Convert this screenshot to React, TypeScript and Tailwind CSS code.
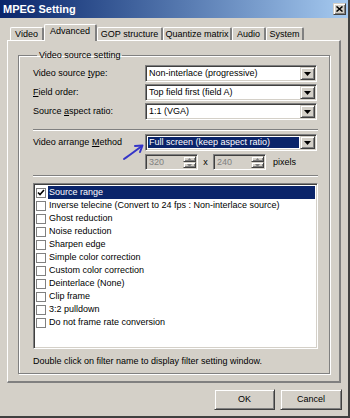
import React from 'react';

const sunken =
  'border border-t-[#808080] border-l-[#808080] border-r-white border-b-white shadow-[inset_1px_1px_0_#404040,inset_-1px_-1px_0_#d4d0c8]';
const raised =
  'border border-t-[#d4d0c8] border-l-[#d4d0c8] border-r-[#404040] border-b-[#404040] shadow-[inset_1px_1px_0_#fff,inset_-1px_-1px_0_#808080]';

const DropButton = () => (
  <div className={`flex w-[15px] items-center justify-center bg-[#d4d0c8] ${raised}`}>
    <svg width="7" height="4" viewBox="0 0 7 4">
      <path d="M0 0h7L3.5 4z" fill="#000" />
    </svg>
  </div>
);

const Combo = ({ value, active }: { value: string; active?: boolean }) => (
  <div className={`flex h-[17px] w-[172px] bg-white p-[1px] ${sunken}`}>
    <div className="flex min-w-0 flex-1 p-[1px]">
      <span className={`flex flex-1 items-center px-[1px] ${active ? 'bg-[#0a246a] text-white' : ''}`}>{value}</span>
    </div>
    <DropButton />
  </div>
);

const SpinBtn = ({ up }: { up?: boolean }) => (
  <div className={`flex flex-1 items-center justify-center bg-[#d4d0c8] ${raised}`}>
    <svg width="5" height="3" viewBox="0 0 5 3">
      <path d={up ? 'M0 3h5L2.5 0z' : 'M0 0h5L2.5 3z'} fill="#808080" />
    </svg>
  </div>
);

const Spin = ({ value }: { value: string }) => (
  <div className={`flex h-[16px] w-[53px] bg-[#d4d0c8] p-[1px] ${sunken}`}>
    <span className="flex flex-1 items-center pl-[2px] text-[#808080]">{value}</span>
    <div className="flex w-[13px] flex-col">
      <SpinBtn up />
      <SpinBtn />
    </div>
  </div>
);

const Check = ({ on }: { on?: boolean }) => (
  <span className="flex h-[10px] w-[10px] shrink-0 items-center justify-center border border-[#808080] bg-white">
    {on && (
      <svg width="8" height="7" viewBox="0 0 8 7">
        <path d="M1 3.5 L3 5.5 L7 1" stroke="#000" strokeWidth="1.6" fill="none" />
      </svg>
    )}
  </span>
);

const Separator = ({ className }: { className?: string }) => (
  <div className={`h-[2px] border-t border-t-[#808080] border-b border-b-white ${className ?? ''}`} />
);

const TABS = [
  { label: 'Video', w: 'w-[34px]' },
  { label: 'Advanced', w: 'w-[53px]', active: true },
  { label: 'GOP structure', w: 'w-[66px]' },
  { label: 'Quantize matrix', w: 'w-[69px]' },
  { label: 'Audio', w: 'w-[34px]' },
  { label: 'System', w: 'w-[38px]' },
];

const FILTERS = [
  'Source range',
  'Inverse telecine (Convert to 24 fps : Non-interlace source)',
  'Ghost reduction',
  'Noise reduction',
  'Sharpen edge',
  'Simple color correction',
  'Custom color correction',
  'Deinterlace (None)',
  'Clip frame',
  '3:2 pulldown',
  'Do not frame rate conversion',
];

const Label = ({ before, u, after }: { before: string; u: string; after: string }) => (
  <span className="w-[112px] shrink-0">
    {before}
    <span className="underline">{u}</span>
    {after}
  </span>
);

export default function App() {
  return (
    <div className="flex h-[418px] w-[350px] flex-col border-r-2 border-b-2 border-r-[#404040] border-b-[#404040] bg-[#d4d0c8] font-['Liberation_Sans','Arial',sans-serif] text-[9px] leading-[11px] text-black">
      {/* title bar */}
      <div className="flex h-[18px] items-center justify-between bg-gradient-to-r from-[#0a246a] to-[#a6caf0] pl-[3px] pr-[2px]">
        <span className="text-[11px] font-bold text-white">MPEG Setting</span>
        <div className={`flex h-[12px] w-[13px] items-center justify-center bg-[#d4d0c8] ${raised}`}>
          <svg width="7" height="6" viewBox="0 0 7 6">
            <path d="M0.5 0.5 L6.5 5.5 M6.5 0.5 L0.5 5.5" stroke="#000" strokeWidth="1.5" />
          </svg>
        </div>
      </div>

      {/* tabs */}
      <div className="mt-[6px] flex h-[16px] items-end pl-[10px]">
        {TABS.map((t) => (
          <div
            key={t.label}
            className={`${t.w} relative flex items-center justify-center rounded-t-[2px] border-t border-l border-r-2 border-t-white border-l-white border-r-[#808080] bg-[#d4d0c8] ${
              t.active ? 'z-10 -mb-px h-[17px] pb-[3px]' : 'h-[13px]'
            }`}
          >
            {t.label}
          </div>
        ))}
      </div>

      {/* tab panel */}
      <div className="ml-[7px] flex h-[343px] w-[334px] flex-col border-t border-l border-r-2 border-b-2 border-t-white border-l-white border-r-[#808080] border-b-[#808080] pt-[9px] pl-[10px]">
        <fieldset className="h-[324px] w-[312px] border border-[#808080] pl-[14px] pr-[11px] shadow-[inset_1px_1px_0_#fff,1px_1px_0_#fff]">
          <legend className="ml-[4px] px-[2px]">Video source setting</legend>

          <div className="mt-[4px] flex flex-col gap-[2px]">
            <div className="flex items-center">
              <Label before="Video source " u="t" after="ype:" />
              <Combo value="Non-interlace (progressive)" />
            </div>
            <div className="flex items-center">
              <Label before="" u="F" after="ield order:" />
              <Combo value="Top field first (field A)" />
            </div>
            <div className="flex items-center">
              <Label before="Source " u="a" after="spect ratio:" />
              <Combo value="1:1 (VGA)" />
            </div>
          </div>

          <Separator className="mt-[9px]" />

          <div className="relative mt-[3px] flex items-center">
            <Label before="Video arrange " u="M" after="ethod" />
            <Combo value="Full screen (keep aspect ratio)" active />
            <svg className="absolute left-[88px] top-[8px]" width="26" height="20" viewBox="0 0 26 20">
              <path d="M3 17 C9 13, 14 9, 21 4" stroke="#3434c8" strokeWidth="2" fill="none" strokeLinecap="round" />
              <path d="M14 4 L21.5 3.5 L19 10" stroke="#3434c8" strokeWidth="2" fill="none" strokeLinecap="round" strokeLinejoin="round" />
            </svg>
          </div>

          <div className="mt-[3px] flex items-center pl-[112px]">
            <Spin value="320" />
            <span className="w-[15px] text-center">x</span>
            <Spin value="240" />
            <span className="ml-[7px]">pixels</span>
          </div>

          <Separator className="mt-[5px]" />

          <div className={`mt-[6px] h-[166px] w-[285px] bg-white p-[2px] ${sunken}`}>
            {FILTERS.map((f, i) => (
              <div key={f} className="flex h-[13px] items-center">
                <Check on={i === 0} />
                <span
                  className={`ml-[2px] flex h-full flex-1 items-center pl-[1px] ${
                    i === 0 ? 'bg-[#0a246a] text-white' : ''
                  }`}
                >
                  {f}
                </span>
              </div>
            ))}
          </div>

          <div className="mt-[7px]">Double click on filter name to display filter setting window.</div>
        </fieldset>
      </div>

      {/* buttons */}
      <div className="mt-[6px] flex justify-end gap-[5px] pr-[6px]">
        <button className={`h-[21px] w-[61px] bg-[#d4d0c8] ${raised}`}>OK</button>
        <button className={`h-[21px] w-[62px] bg-[#d4d0c8] ${raised}`}>Cancel</button>
      </div>
    </div>
  );
}
